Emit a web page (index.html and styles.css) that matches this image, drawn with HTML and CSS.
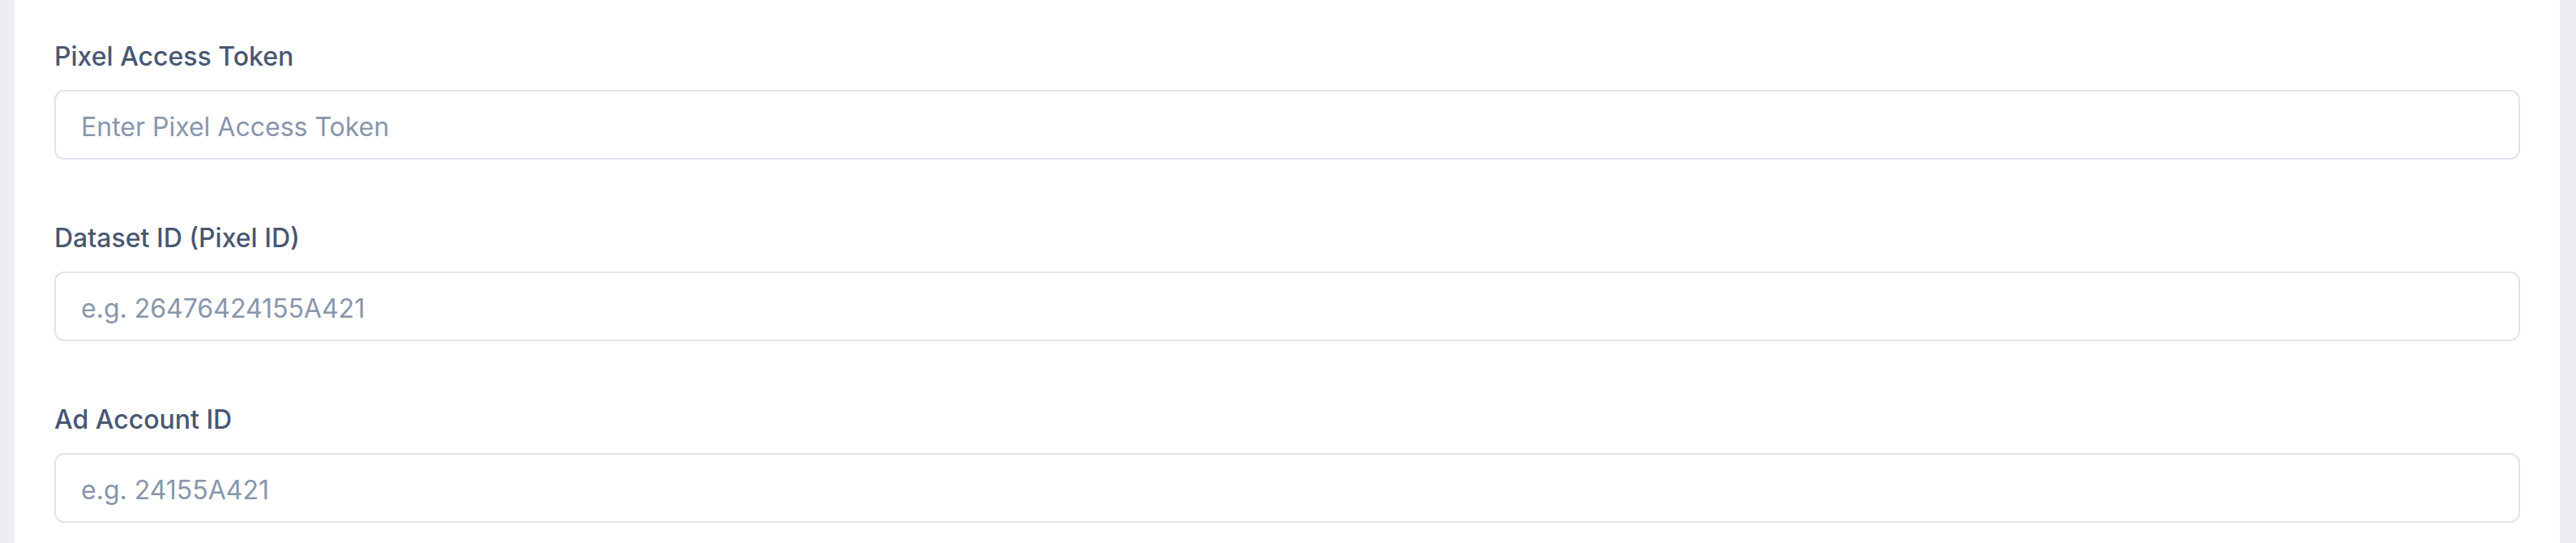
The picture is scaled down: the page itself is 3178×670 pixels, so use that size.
FILE: index.html
```html
<!DOCTYPE html>
<html lang="en">
<head>
<meta charset="utf-8">
<title>Pixel settings</title>
<link rel="stylesheet" href="styles.css">
</head>
<body>
  <div class="page">
    <section class="card">
      <div class="field">
        <label class="field-label" for="token">Pixel Access Token</label>
        <input class="field-input" id="token" type="text" placeholder="Enter Pixel Access Token">
      </div>
      <div class="field">
        <label class="field-label" for="dataset">Dataset ID (Pixel ID)</label>
        <input class="field-input" id="dataset" type="text" placeholder="e.g. 26476424155A421">
      </div>
      <div class="field">
        <label class="field-label" for="account">Ad Account ID</label>
        <input class="field-input" id="account" type="text" placeholder="e.g. 24155A421">
      </div>
    </section>
  </div>
</body>
</html>
```

FILE: styles.css
```css
* { box-sizing: border-box; }

html, body {
  margin: 0;
  padding: 0;
  height: 100%;
  background: #eceef3;
  font-family: Inter, "Noto Sans", "Liberation Sans", sans-serif;
}

.page {
  padding: 0 20px 0 18px;
  height: 100%;
}

.card {
  background: #ffffff;
  height: 100%;
  padding: 50px 49px 0 49px;
  display: flex;
  flex-direction: column;
  gap: 77px;
}

.field {
  display: flex;
  flex-direction: column;
}

.field-label {
  display: block;
  font-size: 32px;
  line-height: 40px;
  font-weight: 500;
  color: #475773;
  margin-bottom: 21px;
}

.field-input {
  display: block;
  width: 100%;
  height: 86px;
  border: 2px solid #dfe4ec;
  border-radius: 12px;
  padding: 4px 32px 0 31px;
  font-family: inherit;
  font-size: 32px;
  color: #1e293b;
  background: #ffffff;
  outline: none;
}

.field-input::placeholder {
  color: #8896ac;
  opacity: 1;
}
```
